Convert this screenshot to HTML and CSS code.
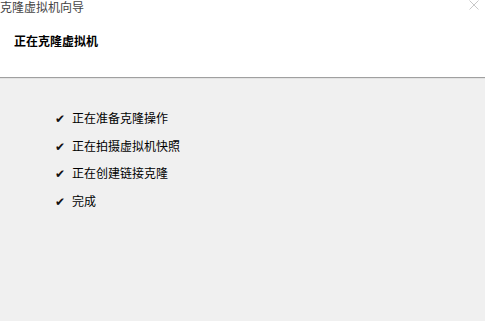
FILE: index.html
```html
<!DOCTYPE html>
<html lang="zh">
<head>
<meta charset="utf-8">
<link rel="stylesheet" href="styles.css">
</head>
<body>
<div class="window">
  <div class="top">
    <div class="titlebar">
      <span class="title">克隆虚拟机向导</span>
      <span class="close">
        <svg width="10" height="10" viewBox="0 0 10 10"><path d="M0.5 0.5 L9.5 9.5 M9.5 0.5 L0.5 9.5" stroke="#c8c8c8" stroke-width="1" fill="none"/></svg>
      </span>
    </div>
    <div class="heading">正在克隆虚拟机</div>
  </div>
  <div class="content">
    <ul class="steps">
      <li><span class="check">✔</span><span>正在准备克隆操作</span></li>
      <li><span class="check">✔</span><span>正在拍摄虚拟机快照</span></li>
      <li><span class="check">✔</span><span>正在创建链接克隆</span></li>
      <li><span class="check">✔</span><span>完成</span></li>
    </ul>
  </div>
</div>
</body>
</html>
```
FILE: styles.css
```css
html, body {
  margin: 0;
  padding: 0;
  height: 100%;
}
body {
  font-family: "Noto Sans CJK SC", "Liberation Sans", sans-serif;
  font-size: 12px;
  color: #000;
  background: #f0f0f0;
}
.window {
  display: flex;
  flex-direction: column;
  height: 100%;
}
.top {
  background: #fff;
  height: 78px;
  border-bottom: 1px solid #a0a0a0;
  box-sizing: border-box;
}
.titlebar {
  display: flex;
  justify-content: space-between;
  align-items: flex-start;
  height: 16px;
  line-height: 13px;
}
.title {
  color: #444;
}
.close {
  margin-right: 6px;
  height: 10px;
}
.close svg { display: block; }
.heading {
  font-weight: bold;
  padding-left: 14px;
  margin-top: 17px;
  line-height: 16px;
}
.content {
  flex: 1;
  background: #f0f0f0;
  border-top: 1px solid #e3e3e3;
}
.steps {
  list-style: none;
  margin: 0;
  padding: 25px 0 0 55px;
}
.steps li {
  display: flex;
  align-items: center;
  height: 27.5px;
}
.check {
  width: 17px;
  font-size: 12px;
  color: #111;
}
```
